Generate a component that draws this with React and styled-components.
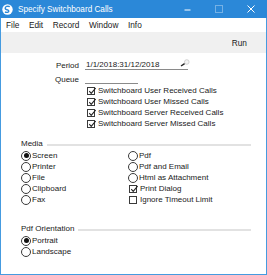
import React from 'react';
import styled, { createGlobalStyle } from 'styled-components';

const GlobalStyle = createGlobalStyle`
  html, body {
    margin: 0;
    padding: 0;
    background: #fff;
  }
  body {
    font-family: "Liberation Sans", Arial, sans-serif;
    color: #1a1a1a;
  }
`;

const Window = styled.div`
  width: 267px;
  height: 275px;
  display: flex;
  flex-direction: column;
  overflow: hidden;
`;

const TitleBar = styled.div`
  height: 18px;
  flex: none;
  background: #2b88d8;
  display: flex;
  align-items: center;
  color: #fff;
`;

const AppIcon = styled.svg`
  width: 11px;
  height: 11px;
  margin-left: 2px;
  margin-right: 5px;
`;

const Title = styled.span`
  font-size: 8.2px;
  white-space: nowrap;
`;

const Controls = styled.div`
  margin-left: auto;
  display: flex;
  height: 100%;
`;

const ControlButton = styled.div`
  width: 32px;
  height: 100%;
  display: flex;
  align-items: center;
  justify-content: center;
  opacity: ${p => (p.$faded ? 0.35 : 1)};
`;

const Frame = styled.div`
  flex: 1;
  display: flex;
  flex-direction: column;
  border: 1px solid #459be0;
  border-top: none;
  min-height: 0;
`;

const MenuBar = styled.div`
  height: 14px;
  flex: none;
  display: flex;
  align-items: center;
  gap: 9.5px;
  padding-left: 5px;
  font-size: 8.3px;
`;

const Toolbar = styled.div`
  height: 21px;
  flex: none;
  background: #f0f0f0;
  display: flex;
  align-items: center;
  justify-content: flex-end;
  padding-right: 19px;
  font-size: 8.3px;
`;

const Content = styled.div`
  flex: 1;
  display: flex;
  flex-direction: column;
  padding-top: 5px;
  font-size: 8px;
`;

const FieldGrid = styled.div`
  display: grid;
  grid-template-columns: 78px auto;
  column-gap: 6px;
  grid-auto-rows: 14px;
  align-items: center;
`;

const Label = styled.div`
  text-align: right;
  white-space: nowrap;
`;

const Field = styled.div`
  width: ${p => p.$width}px;
  height: 10px;
  box-sizing: border-box;
  border-bottom: 1px solid #8a8a8a;
  display: flex;
  align-items: center;
  padding-left: 1px;
`;

const LookupIcon = styled.svg`
  width: 10px;
  height: 8px;
  margin-left: auto;
  margin-right: -2px;
  margin-top: -4px;
`;

const CheckList = styled.div`
  display: flex;
  flex-direction: column;
  padding-left: 86px;
  margin-top: -1px;
`;

const Row = styled.div`
  height: 11px;
  display: flex;
  align-items: center;
  white-space: nowrap;
`;

const Box = styled.span`
  width: 8px;
  height: 8px;
  box-sizing: border-box;
  border: 1px solid #3a3a3a;
  background: #fff;
  margin-right: ${p => p.$gap}px;
  margin-left: ${p => p.$indent || 0}px;
  position: relative;
  flex: none;
`;

const Tick = styled.svg`
  position: absolute;
  left: 0;
  top: -1px;
  width: 8px;
  height: 8px;
`;

const Radio = styled.span`
  width: 10px;
  height: 10px;
  box-sizing: border-box;
  border: 1px solid #3a3a3a;
  border-radius: 50%;
  background: #fff;
  display: flex;
  align-items: center;
  justify-content: center;
  flex: none;
  margin-right: 1px;

  &::after {
    content: "";
    width: 5px;
    height: 5px;
    border-radius: 50%;
    background: ${p => (p.$on ? '#111' : 'transparent')};
  }
`;

const SectionHeader = styled.div`
  height: 11px;
  display: flex;
  align-items: center;
  padding-left: 20px;
  padding-right: 15px;
  margin-top: ${p => p.$top}px;
`;

const Rule = styled.div`
  flex: 1;
  height: 2px;
  background: #e2e2e2;
  margin-left: 4px;
  margin-top: ${p => p.$drop || 0}px;
`;

const OptionGrid = styled.div`
  display: grid;
  grid-template-columns: 107px auto;
  grid-template-rows: repeat(${p => p.$rows}, 11px);
  grid-auto-flow: column;
  padding-left: 20px;
  margin-top: 1px;
`;

const CheckBox = ({ checked, gap = 3, indent, children }) => (
  <Row>
    <Box $gap={gap} $indent={indent}>
      {checked && (
        <Tick viewBox="0 0 8 8">
          <path d="M1.3 4.2 L3.2 6.3 L7.6 1" fill="none" stroke="#222" strokeWidth="1.1" />
        </Tick>
      )}
    </Box>
    {children}
  </Row>
);

const RadioOption = ({ on, children }) => (
  <Row>
    <Radio $on={on} />
    {children}
  </Row>
);

const queueOptions = [
  'Switchboard User Received Calls',
  'Switchboard User Missed Calls',
  'Switchboard Server Received Calls',
  'Switchboard Server Missed Calls',
];

const mediaLeft = ['Screen', 'Printer', 'File', 'Clipboard', 'Fax'];
const mediaRight = ['Pdf', 'Pdf and Email', 'Html as Attachment'];

export default function App() {
  return (
    <>
      <GlobalStyle />
      <Window>
        <TitleBar>
          <AppIcon viewBox="0 0 11 11">
            <circle cx="5.5" cy="5.5" r="5.2" fill="#fff" />
            <path d="M7.8 2.6 C5.5 1.6 3 2.6 3.2 4.6 C3.4 6.2 6.6 5.4 6.8 7 C7 8.4 4.6 8.8 3 8" fill="none" stroke="#2b88d8" strokeWidth="1.4" />
          </AppIcon>
          <Title>Specify Switchboard Calls</Title>
          <Controls>
            <ControlButton>
              <svg width="7" height="7" viewBox="0 0 7 7">
                <line x1="0.5" y1="4" x2="6.5" y2="4" stroke="#fff" strokeWidth="1" />
              </svg>
            </ControlButton>
            <ControlButton $faded>
              <svg width="8" height="8" viewBox="0 0 8 8">
                <rect x="0.5" y="0.5" width="7" height="7" fill="none" stroke="#fff" strokeWidth="1" />
              </svg>
            </ControlButton>
            <ControlButton>
              <svg width="8" height="8" viewBox="0 0 8 8">
                <path d="M0.5 0.5 L7.5 7.5 M7.5 0.5 L0.5 7.5" stroke="#fff" strokeWidth="1" />
              </svg>
            </ControlButton>
          </Controls>
        </TitleBar>
        <Frame>
          <MenuBar>
            <span>File</span>
            <span>Edit</span>
            <span>Record</span>
            <span>Window</span>
            <span>Info</span>
          </MenuBar>
          <Toolbar>Run</Toolbar>
          <Content>
            <FieldGrid>
              <Label>Period</Label>
              <Field $width={103}>
                1/1/2018:31/12/2018
                <LookupIcon viewBox="0 0 10 8">
                  <circle cx="6.8" cy="3" r="2.3" fill="#f4f4f4" stroke="#c8c8c8" strokeWidth="0.8" />
                  <line x1="1" y1="7" x2="4.6" y2="4.6" stroke="#222" strokeWidth="1.4" />
                </LookupIcon>
              </Field>
              <Label>Queue</Label>
              <Field $width={53} />
            </FieldGrid>
            <CheckList>
              {queueOptions.map(q => (
                <CheckBox key={q} checked>{q}</CheckBox>
              ))}
            </CheckList>

            <SectionHeader $top={9}>
              Media
              <Rule $drop={3} />
            </SectionHeader>
            <OptionGrid $rows={5}>
              {mediaLeft.map((m, i) => (
                <RadioOption key={m} on={i === 0}>{m}</RadioOption>
              ))}
              {mediaRight.map(m => (
                <RadioOption key={m}>{m}</RadioOption>
              ))}
              <CheckBox checked gap={3} indent={1}>Print Dialog</CheckBox>
              <CheckBox gap={3} indent={1}>Ignore Timeout Limit</CheckBox>
            </OptionGrid>

            <SectionHeader $top={18}>
              Pdf Orientation
              <Rule $drop={2} />
            </SectionHeader>
            <OptionGrid $rows={2}>
              <RadioOption on>Portrait</RadioOption>
              <RadioOption>Landscape</RadioOption>
            </OptionGrid>
          </Content>
        </Frame>
      </Window>
    </>
  );
}
